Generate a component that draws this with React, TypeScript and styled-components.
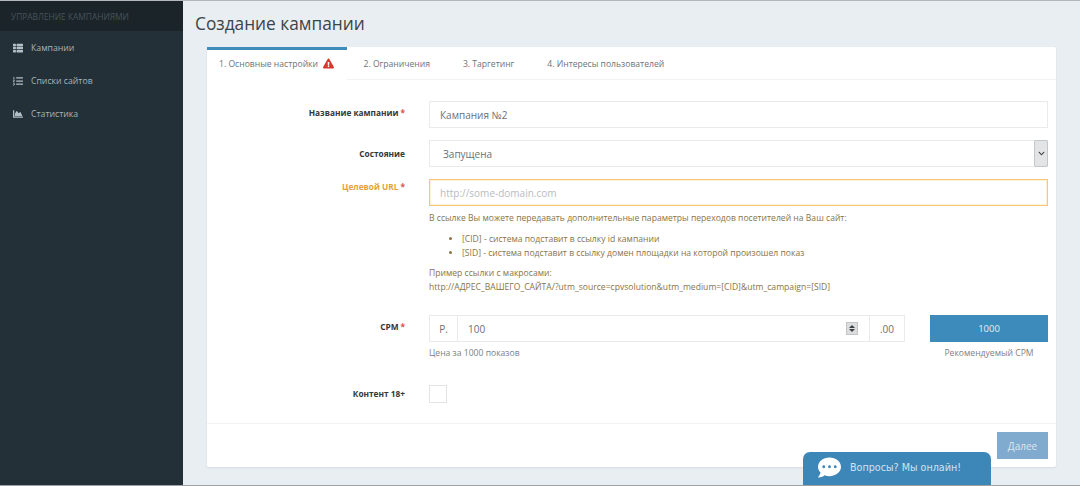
// App.tsx
import React from 'react';
import styled, { createGlobalStyle } from 'styled-components';
import { FaThList, FaListOl, FaChartArea, FaExclamationTriangle, FaCommentDots, FaChevronDown } from 'react-icons/fa';

const GlobalStyle = createGlobalStyle`
  html, body {
    margin: 0;
    padding: 0;
    height: 100%;
    overflow: hidden;
    font-family: "Open Sans", "Liberation Sans", sans-serif;
  }
  * {
    box-sizing: border-box;
  }
`;

const Page = styled.div`
  position: relative;
  display: flex;
  width: 1080px;
  height: 486px;
  overflow: hidden;
  background: #e9eef3;
  border-top: 1px solid #b5b8ba;
  border-bottom: 1px solid #9ea2a5;
`;

const Sidebar = styled.aside`
  flex: 0 0 183px;
  background: #233038;
`;

const SidebarHead = styled.div`
  height: 30px;
  padding-left: 11px;
  display: flex;
  align-items: center;
  background: #1b2429;
  color: #46535b;
  font-size: 8.4px;
  text-transform: uppercase;
`;

const NavList = styled.nav`
  display: flex;
  flex-direction: column;
`;

const NavItem = styled.a`
  height: 33px;
  display: flex;
  align-items: center;
  gap: 8px;
  padding-left: 13px;
  color: #a9b4ba;
  font-size: 8.7px;
  svg {
    width: 10px;
    height: 10px;
    color: #b4bfc5;
  }
`;

const Main = styled.main`
  flex: 1;
  padding: 0 24px 0 12px;
`;

const Title = styled.h1`
  margin: 0;
  height: 46px;
  padding-top: 11px;
  font-size: 17.3px;
  line-height: 24px;
  font-weight: 400;
  color: #3d4347;
`;

const Card = styled.section`
  margin-left: 12px;
  width: 849px;
  height: 420px;
  display: flex;
  flex-direction: column;
  background: #fff;
  border-radius: 2px;
  box-shadow: 0 1px 2px rgba(120, 135, 150, 0.18);
`;

const Tabs = styled.div`
  display: flex;
  height: 33px;
  border-bottom: 1px solid #f2f3f4;
`;

const Tab = styled.div<{ $active?: boolean }>`
  height: ${p => (p.$active ? '33px' : '32px')};
  display: flex;
  align-items: center;
  gap: 5px;
  padding: ${p => (p.$active ? '0 12px 3px' : '1px 16.5px 0')};
  width: ${p => (p.$active ? '140px' : 'auto')};
  white-space: nowrap;
  font-size: 8.6px;
  color: #6d7377;
  background: #fff;
  border-top: ${p => (p.$active ? '3px solid #3f8bb9' : '0')};
  svg {
    width: 11px;
    height: 11px;
    color: #d5392c;
  }
`;

const Form = styled.div`
  flex: 1;
  display: flex;
  flex-direction: column;
  padding-top: 21px;
`;

const Row = styled.div<{ $gap?: number }>`
  display: flex;
  gap: 24px;
  padding-right: 8px;
  margin-bottom: ${p => p.$gap ?? 12}px;
`;

const Label = styled.label<{ $warn?: boolean; $top?: number }>`
  flex: 0 0 198px;
  padding-top: ${p => p.$top ?? 5}px;
  text-align: right;
  font-size: 8.3px;
  line-height: 14px;
  font-weight: 700;
  color: ${p => (p.$warn ? '#e5a23c' : '#33383b')};
`;

const Star = styled.span`
  color: #d9534f;
  margin-left: 2px;
`;

const Field = styled.div`
  flex: 1;
  min-width: 0;
`;

const TextBox = styled.div`
  height: 27px;
  display: flex;
  align-items: center;
  padding-left: 10px;
  font-size: 10px;
  color: #6a7074;
  border: 1px solid #e8eaec;
  background: #fff;
`;

const UrlBox = styled(TextBox)`
  color: #b8bcbf;
  border-color: #f6c777;
  box-shadow: inset 0 0 0 1px #fdf0d8;
`;

const SelectBox = styled(TextBox)`
  padding-left: 13px;
  padding-right: 0;
  justify-content: space-between;
`;

const SelectArrow = styled.span`
  width: 14px;
  height: 27px;
  margin-right: -1px;
  display: flex;
  align-items: center;
  justify-content: center;
  background: #e3e4e5;
  border: 1px solid #c4c6c8;
  border-radius: 2px;
  color: #3f4447;
  svg {
    width: 7px;
    height: 7px;
  }
`;

const Help = styled.div`
  margin-top: 5px;
  font-size: 8.6px;
  line-height: 13px;
  color: #8a7448;
`;

const HelpLine = styled.p`
  margin: 0;
  padding-top: 1px;
`;

const HelpList = styled.ul`
  margin: 7px 0 6px;
  padding-left: 33px;
  li {
    height: 14px;
    line-height: 14px;
  }
`;

const CpmLayout = styled.div`
  display: flex;
  gap: 25px;
`;

const CpmLeft = styled.div`
  width: 476px;
`;

const CpmRight = styled.div`
  flex: 1;
`;

const InputGroup = styled.div`
  height: 27px;
  display: flex;
  border: 1px solid #e8eaec;
  font-size: 10px;
  color: #6a7074;
`;

const Addon = styled.span<{ $w: number }>`
  flex: 0 0 ${p => p.$w}px;
  display: flex;
  align-items: center;
  justify-content: center;
`;

const NumberCell = styled.span`
  flex: 1;
  display: flex;
  align-items: center;
  justify-content: space-between;
  padding: 0 11px 0 10px;
  border-left: 1px solid #e8eaec;
  border-right: 1px solid #e8eaec;
`;

const Spinner = styled.span`
  width: 12px;
  height: 13px;
  display: flex;
  flex-direction: column;
  align-items: center;
  justify-content: space-around;
  padding: 2px 0;
  background: #dcdddf;
  border: 1px solid #c2c4c6;
  svg {
    display: block;
    width: 6px;
    height: 3px;
    fill: #3c4043;
  }
`;

const SmallNote = styled.div<{ $center?: boolean }>`
  margin-top: 5px;
  font-size: 8.6px;
  line-height: 13px;
  color: #7c8285;
  text-align: ${p => (p.$center ? 'center' : 'left')};
`;

const RecButton = styled.button`
  width: 100%;
  height: 27px;
  border: 0;
  padding: 0;
  background: #3d8bbb;
  color: #e4eff6;
  font-family: inherit;
  font-size: 9.5px;
`;

const Checkbox = styled.span`
  display: block;
  width: 18px;
  height: 18px;
  border: 1px solid #e2e4e6;
  background: #fff;
`;

const Footer = styled.div`
  height: 44px;
  display: flex;
  justify-content: flex-end;
  padding: 8px 8px 0 0;
  border-top: 1px solid #f2f3f4;
`;

const NextButton = styled.button`
  width: 51px;
  height: 27px;
  border: 0;
  padding: 0;
  background: #80abcf;
  color: #dbe7f0;
  font-family: inherit;
  font-size: 10px;
`;

const ChatWidget = styled.div`
  position: absolute;
  left: 803px;
  bottom: -1px;
  width: 188px;
  height: 34px;
  display: flex;
  align-items: center;
  gap: 9px;
  padding: 0 0 3px 15px;
  background: #3d87b8;
  border-radius: 7px 7px 0 0;
  color: #cfe3f0;
  font-family: "DejaVu Sans", sans-serif;
  font-size: 9.6px;
  svg {
    width: 23px;
    height: 23px;
    color: #fff;
  }
`;

const App: React.FC = () => {
  return (
    <>
      <GlobalStyle />
      <Page>
        <Sidebar>
          <SidebarHead>Управление кампаниями</SidebarHead>
          <NavList>
            <NavItem><FaThList />Кампании</NavItem>
            <NavItem><FaListOl />Списки сайтов</NavItem>
            <NavItem><FaChartArea />Статистика</NavItem>
          </NavList>
        </Sidebar>
        <Main>
          <Title>Создание кампании</Title>
          <Card>
            <Tabs>
              <Tab $active>1. Основные настройки <FaExclamationTriangle /></Tab>
              <Tab>2. Ограничения</Tab>
              <Tab>3. Таргетинг</Tab>
              <Tab>4. Интересы пользователей</Tab>
            </Tabs>
            <Form>
              <Row>
                <Label>Название кампании<Star>*</Star></Label>
                <Field><TextBox>Кампания №2</TextBox></Field>
              </Row>
              <Row>
                <Label $top={7}>Состояние</Label>
                <Field>
                  <SelectBox>
                    Запущена
                    <SelectArrow><FaChevronDown /></SelectArrow>
                  </SelectBox>
                </Field>
              </Row>
              <Row $gap={21}>
                <Label $warn $top={1}>Целевой URL<Star>*</Star></Label>
                <Field>
                  <UrlBox>http://some-domain.com</UrlBox>
                  <Help>
                    <HelpLine>В ссылке Вы можете передавать дополнительные параметры переходов посетителей на Ваш сайт:</HelpLine>
                    <HelpList>
                      <li>[CID] - система подставит в ссылку id кампании</li>
                      <li>[SID] - система подставит в ссылку домен площадки на которой произошел показ</li>
                    </HelpList>
                    <HelpLine>Пример ссылки с макросами:</HelpLine>
                    <HelpLine>http://АДРЕС_ВАШЕГО_САЙТА/?utm_source=cpvsolution&amp;utm_medium=[CID]&amp;utm_campaign=[SID]</HelpLine>
                  </Help>
                </Field>
              </Row>
              <Row $gap={25}>
                <Label>CPM<Star>*</Star></Label>
                <Field>
                  <CpmLayout>
                    <CpmLeft>
                      <InputGroup>
                        <Addon $w={27}>Р.</Addon>
                        <NumberCell>
                          100
                          <Spinner>
                            <svg viewBox="0 0 6 3"><polygon points="3,0 6,3 0,3" /></svg>
                            <svg viewBox="0 0 6 3"><polygon points="0,0 6,0 3,3" /></svg>
                          </Spinner>
                        </NumberCell>
                        <Addon $w={34}>.00</Addon>
                      </InputGroup>
                      <SmallNote>Цена за 1000 показов</SmallNote>
                    </CpmLeft>
                    <CpmRight>
                      <RecButton>1000</RecButton>
                      <SmallNote $center>Рекомендуемый CPM</SmallNote>
                    </CpmRight>
                  </CpmLayout>
                </Field>
              </Row>
              <Row $gap={0}>
                <Label $top={2}>Контент 18+</Label>
                <Field><Checkbox /></Field>
              </Row>
            </Form>
            <Footer>
              <NextButton>Далее</NextButton>
            </Footer>
          </Card>
        </Main>
        <ChatWidget>
          <FaCommentDots />
          Вопросы? Мы онлайн!
        </ChatWidget>
      </Page>
    </>
  );
};

export default App;
